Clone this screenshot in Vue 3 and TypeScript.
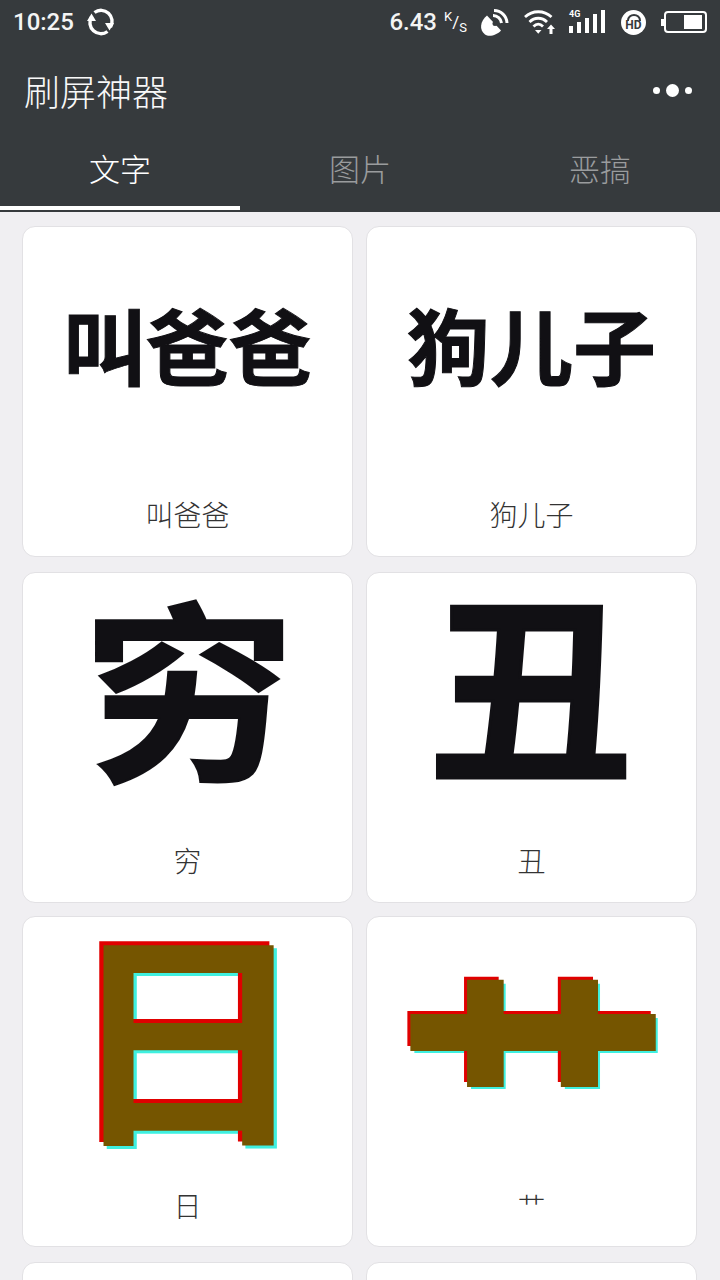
<template>
  <div class="page">
    <header class="top">
      <div class="status">
        <span class="time">10:25</span>
        <svg class="sync" width="36" height="36" viewBox="0 0 36 36" fill="none" stroke="#fff" stroke-width="3.4">
          <path d="M11.5 8.500A11 11 0 0 1 27.500 23" />
          <path d="M24.500 27.500A11 11 0 0 1 8.500 13" />
          <path d="M22 19h9l-4.500 7.500z" fill="#fff" stroke="none" />
          <path d="M4 17h9l-4.500-7.500z" fill="#fff" stroke="none" />
        </svg>
        <span class="spacer"></span>
        <span class="speed">6.43</span>
        <span class="unit"><sup>K</sup>/<sub>S</sub></span>
        <svg class="dish" width="34" height="36" viewBox="0 0 34 36" fill="#fff">
          <path d="M12 11.500L26 26.500C22 31 14 33.500 10 30.500C4 26 5 17 12 11.500z" />
          <circle cx="20" cy="19.500" r="2.500" fill="#363a3d" />
          <path d="M19 6.500A13 13 0 0 1 32 19" fill="none" stroke="#fff" stroke-width="3" />
          <path d="M18 11.500A8.500 8.500 0 0 1 26.500 19" fill="none" stroke="#fff" stroke-width="3" />
        </svg>
        <svg class="wifi" width="32" height="26" viewBox="0 0 32 26" fill="none" stroke="#fff" stroke-width="2.800">
          <path d="M1 8c7.500-7 19-7 26.500 0" />
          <path d="M5.500 13c5-5 12.500-5 17.500 0" />
          <path d="M9.500 17.500c3-3 6.500-3 9.500 0" />
          <path d="M11 21h6.500l-3.250 3.800z" fill="#fff" stroke="none" />
          <path d="M23 20l4-4.500 4 4.500h-2.500v5h-3v-5z" fill="#fff" stroke="none" />
        </svg>
        <div class="signal">
          <span class="four-g">4G</span>
          <i class="b1"></i>
          <i class="b2"></i>
          <i class="b3"></i>
          <i class="b4"></i>
          <i class="b5"></i>
        </div>
        <div class="hd">
          <svg width="16" height="7" viewBox="0 0 16 7" fill="none" stroke="#363a3d" stroke-width="2">
            <path d="M2 7V6.500a6 5.500 0 0 1 12 0V7" />
          </svg>
          <span>HD</span>
        </div>
        <div class="battery"><b></b></div>
      </div>
      <div class="toolbar">
        <h1>刷屏神器</h1>
        <div class="more"><i></i><i class="big"></i><i></i></div>
      </div>
      <nav class="tabs">
        <div v-for="(t, i) in tabs" :key="t" class="tab" :class="{ on: i === 0 }">{{ t }}</div>
      </nav>
    </header>
    <main class="grid">
      <div v-for="(c, i) in cards" :key="i" class="card">
        <div class="big" :class="c.kind"><span>{{ c.text }}</span></div>
        <div class="label"><span>{{ c.text }}</span></div>
      </div>
    </main>
  </div>
</template>

<script setup lang="ts">
interface Card {
  text: string;
  kind: string;
}

const tabs = ['文字', '图片', '恶搞'];

const cards: Card[] = [
  { text: '叫爸爸', kind: 'mid' },
  { text: '狗儿子', kind: 'mid' },
  { text: '穷', kind: 'qiong' },
  { text: '丑', kind: 'chou' },
  { text: '日', kind: 'ri' },
  { text: '艹', kind: 'cao' },
  { text: '', kind: 'mid' },
  { text: '', kind: 'mid' },
];
</script>

<style>
html,
body {
  margin: 0;
  background: #f0eff2;
}
</style>

<style scoped>
.page {
  height: 1280px;
  overflow: hidden;
  background: #f0eff2;
  font-family: "Noto Sans CJK SC", Roboto, sans-serif;
}

.top {
  background: #363a3d;
  color: #fff;
}

.status {
  height: 44px;
  display: flex;
  align-items: center;
  padding: 0 13px;
  font-family: Roboto, sans-serif;
}

.time,
.speed {
  font-size: 24px;
  font-weight: 500;
  color: #f4f4f4;
}

.sync {
  margin-left: 9px;
}

.spacer {
  flex: 1;
}

.unit {
  width: 24px;
  font-size: 17px;
  margin: 0 7px 0 7px;
  line-height: 1;
  white-space: nowrap;
}

.unit sup,
.unit sub {
  font-size: 13px;
  line-height: 0;
}

.dish {
  margin-right: -1px;
}

.wifi {
  margin-left: 16px;
}

.signal {
  position: relative;
  margin-left: 13px;
  width: 36px;
  height: 22px;
  display: flex;
  align-items: flex-end;
  gap: 4px;
}

.signal i {
  width: 4px;
  background: #fff;
}

.b1 { height: 7px; }
.b2 { height: 11px; }
.b3 { height: 15px; }
.b4 { height: 19px; }
.b5 { height: 23px; }

.four-g {
  position: absolute;
  left: 0;
  top: -2px;
  font-size: 9px;
  font-weight: 700;
  line-height: 10px;
}

.hd {
  margin-left: 16px;
  width: 25px;
  height: 25px;
  border-radius: 50%;
  background: #fff;
  color: #363a3d;
  display: flex;
  flex-direction: column;
  align-items: center;
  justify-content: center;
  font-size: 12px;
  font-weight: 700;
  line-height: 9px;
}

.hd svg {
  display: block;
}

.battery {
  position: relative;
  box-sizing: border-box;
  margin-left: 18px;
  width: 43px;
  height: 22px;
  border: 2px solid #fff;
  border-radius: 4px;
  padding: 2px 3px;
  display: flex;
  justify-content: flex-end;
}

.battery::before {
  content: "";
  position: absolute;
  left: -5px;
  top: 6px;
  width: 3px;
  height: 7px;
  background: #fff;
}

.battery b {
  width: 18px;
  background: #fff;
}

.toolbar {
  height: 92px;
  display: flex;
  align-items: center;
  justify-content: space-between;
  padding: 0 25px 0 24px;
}

h1 {
  margin: 0;
  font-size: 36px;
  font-weight: 300;
  color: #f8f8f8;
  line-height: 1;
}

.more {
  display: flex;
  align-items: center;
  gap: 6px;
  margin-right: 3px;
}

.more i {
  width: 7px;
  height: 7px;
  border-radius: 50%;
  background: #fff;
}

.more i.big {
  width: 13px;
  height: 13px;
}

.tabs {
  display: flex;
  height: 76px;
}

.tab {
  flex: 1;
  height: 73px;
  display: flex;
  align-items: center;
  justify-content: center;
  padding-bottom: 10px;
  box-sizing: border-box;
  font-size: 31px;
  font-weight: 300;
  color: #9a9c9e;
}

.tab.on {
  color: #fff;
  border-bottom: 4px solid #fff;
  height: 74px;
  padding-bottom: 8px;
}

.grid {
  display: grid;
  grid-template-columns: 331px 331px;
  grid-template-rows: 332px 330px 332px 331px;
  column-gap: 13px;
  row-gap: 14px;
  padding: 14px 0 0 22px;
}

.card {
  box-sizing: border-box;
  height: 331px;
  background: #fff;
  border: 1px solid #e2e1e4;
  border-radius: 13px;
  display: flex;
  flex-direction: column;
  align-items: center;
}

.big {
  box-sizing: border-box;
  height: 246px;
  display: flex;
  align-items: center;
  justify-content: center;
  font-weight: 700;
  color: #111014;
  white-space: nowrap;
}

.big span {
  display: block;
  line-height: 1;
}

.mid {
  font-size: 83px;
  padding-bottom: 11px;
  -webkit-text-stroke: 1px #111014;
}

.qiong {
  font-size: 192px;
  padding-bottom: 26px;
  padding-left: 2px;
  -webkit-text-stroke: 2px #111014;
}

.qiong span {
  transform: scaleX(1.11);
}

.chou {
  font-size: 196px;
  padding-bottom: 30px;
  -webkit-text-stroke: 3px #111014;
}

.chou span {
  transform: scaleX(1.04);
}

.ri,
.cao {
  color: #755500;
  text-shadow: -4px -4px 0 #e00000, 3px 3px 0 #3ff0e0;
}

.ri {
  font-size: 230px;
  padding-bottom: 26px;
  padding-left: 1px;
}

.ri span {
  transform: scaleX(1.06);
}

.cao {
  font-size: 275px;
  padding-top: 84px;
  padding-left: 4px;
  -webkit-text-stroke: 2px #755500;
}

.label {
  height: 85px;
  display: flex;
  align-items: center;
  justify-content: center;
  font-size: 28px;
  font-weight: 300;
  color: #333;
}
</style>
